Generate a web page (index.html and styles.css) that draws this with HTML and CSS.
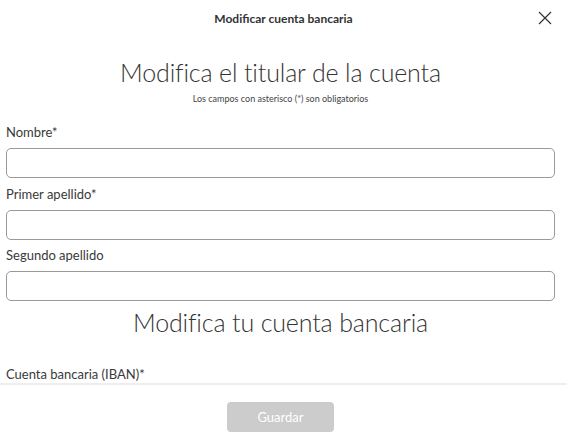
FILE: index.html
```html
<!DOCTYPE html>
<html lang="es">
<head>
<meta charset="utf-8">
<title>Modificar cuenta bancaria</title>
<link rel="stylesheet" href="styles.css">
</head>
<body>
<div class="modal">
  <header class="modal-header">
    <span class="modal-title">Modificar cuenta bancaria</span>
    <button class="close" aria-label="Cerrar">
      <svg width="14" height="14" viewBox="0 0 14 14"><path d="M1 1L13 13M13 1L1 13" stroke="#333" stroke-width="1.2" fill="none"/></svg>
    </button>
  </header>
  <div class="modal-body">
    <h1 class="section-title">Modifica el titular de la cuenta</h1>
    <p class="note">Los campos con asterisco (*) son obligatorios</p>
    <div class="field">
      <label class="label">Nombre*</label>
      <input class="input" type="text">
    </div>
    <div class="field">
      <label class="label">Primer apellido*</label>
      <input class="input" type="text">
    </div>
    <div class="field">
      <label class="label">Segundo apellido</label>
      <input class="input" type="text">
    </div>
    <h2 class="section-title second">Modifica tu cuenta bancaria</h2>
    <div class="field iban">
      <label class="label">Cuenta bancaria (IBAN)*</label>
      <input class="input" type="text">
    </div>
  </div>
  <footer class="modal-footer">
    <button class="save" disabled>Guardar</button>
  </footer>
</div>
</body>
</html>
```
FILE: styles.css
```css
* { box-sizing: border-box; }
html, body { margin: 0; padding: 0; background: #fff; }
body { font-family: "Lato", "Open Sans", sans-serif; color: #333; }
.modal { height: 444px; display: flex; flex-direction: column; }
.modal-header {
  position: relative;
  height: 36px;
  display: flex;
  align-items: center;
  justify-content: center;
  flex: none;
}
.modal-title { font-size: 12px; font-weight: 700; color: #333; }
.close {
  position: absolute;
  right: 15px;
  top: 11px;
  padding: 0;
  border: 0;
  background: none;
  width: 14px;
  height: 14px;
  display: block;
}
.close svg { display: block; }
.modal-body { flex: 1; overflow: hidden; padding: 0 12px 0 6px; }
.section-title {
  margin: 22px 0 0;
  font-size: 25px;
  line-height: 29px;
  font-weight: 300;
  letter-spacing: -0.15px;
  text-align: center;
  color: #333;
}
.section-title.second { margin: 7px 0 0; }
.note { margin: 6px 0 0; font-size: 9px; line-height: 12px; text-align: center; color: #444; }
.field { display: flex; flex-direction: column; }
.label { font-size: 13px; line-height: 16px; color: #3a3a3a; margin: 19px 0 8px; }
.field + .field .label { margin-top: 8px; }
.field + .field + .field .label { margin-top: 7px; }
.input {
  height: 30px;
  border: 1px solid #999;
  border-radius: 5px;
  background: #fff;
  margin: 0;
  padding: 0 8px;
  font: inherit;
}
.iban .label { margin-top: 29px; }
.modal-footer {
  flex: none;
  height: 61px;
  border-top: 2px solid #eee;
  display: flex;
  justify-content: center;
  padding: 17px 6px 0 0;
}
.save {
  width: 107px;
  height: 30px;
  border: 0;
  border-radius: 4px;
  background: #ccc;
  color: #fff;
  font-family: inherit;
  font-size: 13px;
}
```
